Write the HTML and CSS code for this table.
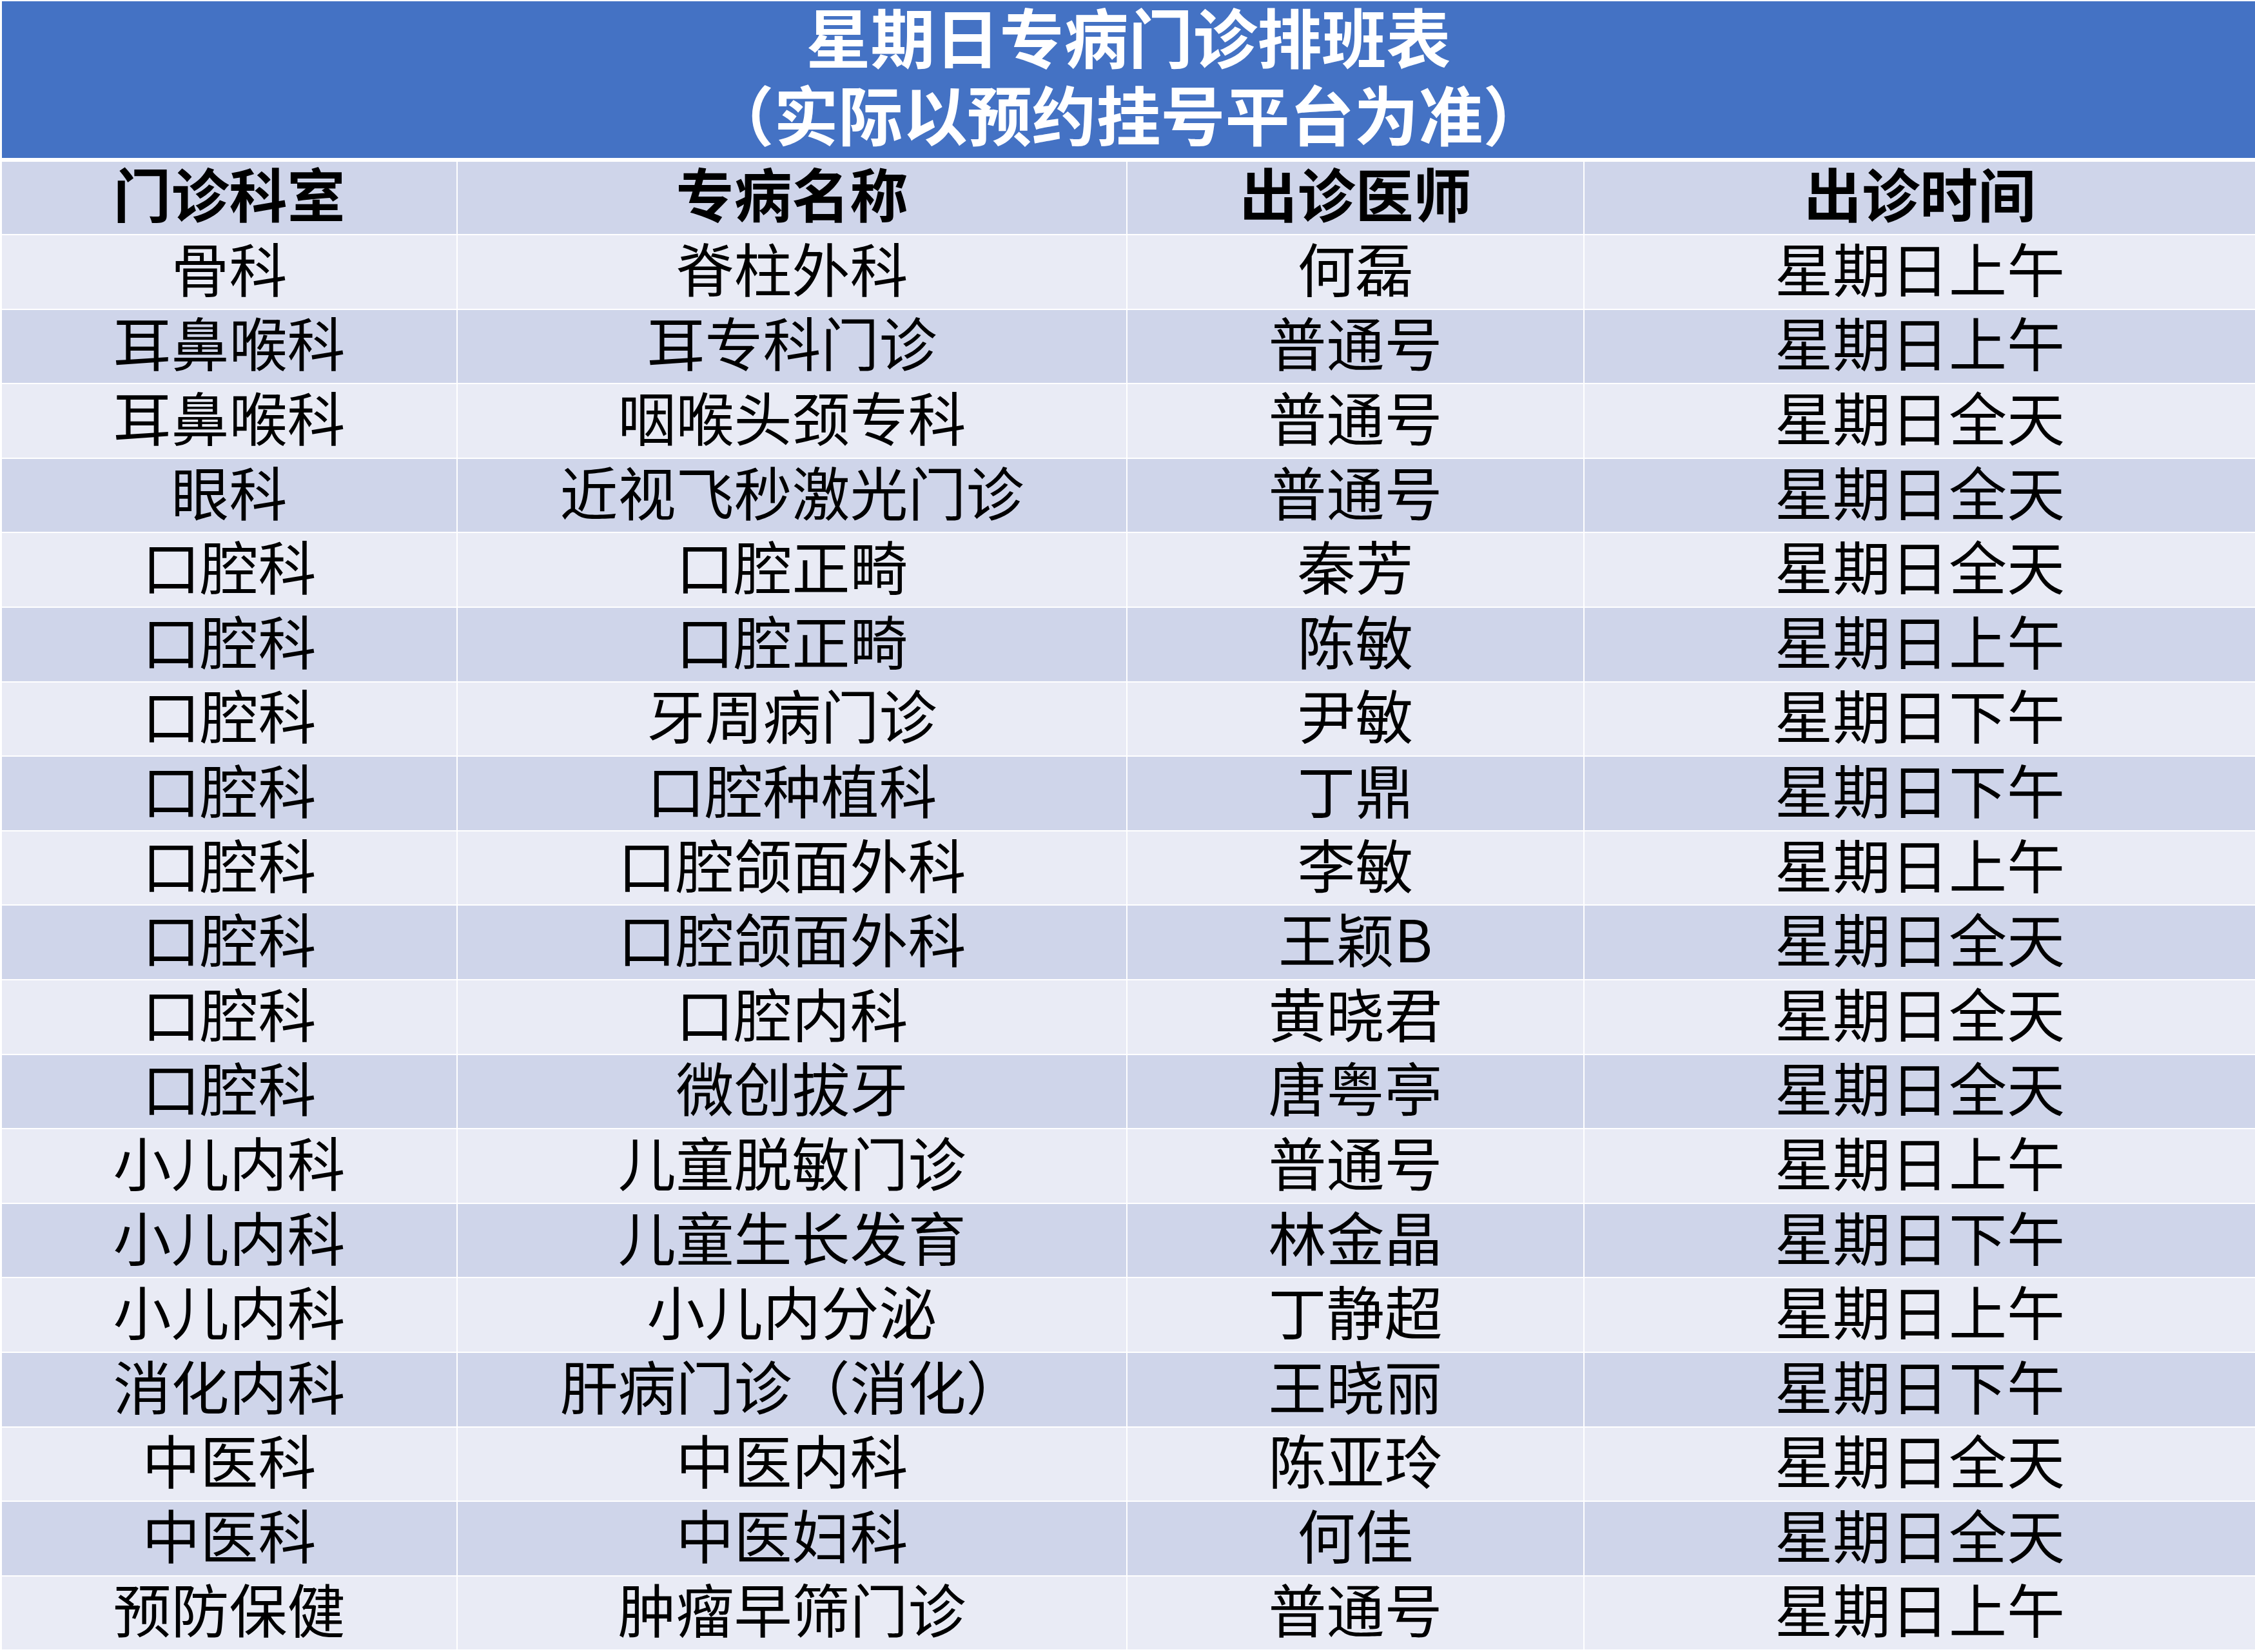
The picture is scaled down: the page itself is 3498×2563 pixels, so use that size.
FILE: index.html
```html
<!DOCTYPE html>
<html lang="zh-CN">
<head>
<meta charset="utf-8">
<title>星期日专病门诊排班表</title>
<link rel="stylesheet" href="styles.css">
</head>
<body>
<div class="sheet">
  <div class="title">
    <div class="title-line">星期日专病门诊排班表</div>
    <div class="title-line">（实际以预约挂号平台为准）</div>
  </div>
  <div class="grid">
    <div class="cell head">门诊科室</div><div class="cell head">专病名称</div><div class="cell head">出诊医师</div><div class="cell head">出诊时间</div>

    <div class="cell light">骨科</div><div class="cell light">脊柱外科</div><div class="cell light">何磊</div><div class="cell light">星期日上午</div>
    <div class="cell dark">耳鼻喉科</div><div class="cell dark">耳专科门诊</div><div class="cell dark">普通号</div><div class="cell dark">星期日上午</div>
    <div class="cell light">耳鼻喉科</div><div class="cell light">咽喉头颈专科</div><div class="cell light">普通号</div><div class="cell light">星期日全天</div>
    <div class="cell dark">眼科</div><div class="cell dark">近视飞秒激光门诊</div><div class="cell dark">普通号</div><div class="cell dark">星期日全天</div>
    <div class="cell light">口腔科</div><div class="cell light">口腔正畸</div><div class="cell light">秦芳</div><div class="cell light">星期日全天</div>
    <div class="cell dark">口腔科</div><div class="cell dark">口腔正畸</div><div class="cell dark">陈敏</div><div class="cell dark">星期日上午</div>
    <div class="cell light">口腔科</div><div class="cell light">牙周病门诊</div><div class="cell light">尹敏</div><div class="cell light">星期日下午</div>
    <div class="cell dark">口腔科</div><div class="cell dark">口腔种植科</div><div class="cell dark">丁鼎</div><div class="cell dark">星期日下午</div>
    <div class="cell light">口腔科</div><div class="cell light">口腔颌面外科</div><div class="cell light">李敏</div><div class="cell light">星期日上午</div>
    <div class="cell dark">口腔科</div><div class="cell dark">口腔颌面外科</div><div class="cell dark">王颖B</div><div class="cell dark">星期日全天</div>
    <div class="cell light">口腔科</div><div class="cell light">口腔内科</div><div class="cell light">黄晓君</div><div class="cell light">星期日全天</div>
    <div class="cell dark">口腔科</div><div class="cell dark">微创拔牙</div><div class="cell dark">唐粤亭</div><div class="cell dark">星期日全天</div>
    <div class="cell light">小儿内科</div><div class="cell light">儿童脱敏门诊</div><div class="cell light">普通号</div><div class="cell light">星期日上午</div>
    <div class="cell dark">小儿内科</div><div class="cell dark">儿童生长发育</div><div class="cell dark">林金晶</div><div class="cell dark">星期日下午</div>
    <div class="cell light">小儿内科</div><div class="cell light">小儿内分泌</div><div class="cell light">丁静超</div><div class="cell light">星期日上午</div>
    <div class="cell dark">消化内科</div><div class="cell dark">肝病门诊（消化）</div><div class="cell dark">王晓丽</div><div class="cell dark">星期日下午</div>
    <div class="cell light">中医科</div><div class="cell light">中医内科</div><div class="cell light">陈亚玲</div><div class="cell light">星期日全天</div>
    <div class="cell dark">中医科</div><div class="cell dark">中医妇科</div><div class="cell dark">何佳</div><div class="cell dark">星期日全天</div>
    <div class="cell light">预防保健</div><div class="cell light">肿瘤早筛门诊</div><div class="cell light">普通号</div><div class="cell light">星期日上午</div>
  </div>
</div>
</body>
</html>
```

FILE: styles.css
```css
html, body {
  margin: 0;
  padding: 0;
  background: #ffffff;
}

body {
  font-family: "Noto Sans CJK SC", "Noto Sans", sans-serif;
  color: #000000;
}

.sheet {
  width: 3498px;
  height: 2563px;
  padding: 2px 0 0 3px;
  box-sizing: border-box;
  overflow: hidden;
}

.title {
  height: 243px;
  background: #4472C4;
  color: #ffffff;
  font-weight: 700;
  font-size: 100px;
  display: flex;
  flex-direction: column;
  align-items: center;
  justify-content: center;
  padding-bottom: 18px;
  box-sizing: border-box;
}

.title-line {
  line-height: 120px;
  white-space: nowrap;
}

.grid {
  margin-top: 6px;
  display: grid;
  grid-template-columns: 705px 1037px 707px 1040px;
  grid-template-rows: 112px;
  grid-auto-rows: 113.6px;
  gap: 2px;
}

.cell {
  display: flex;
  align-items: center;
  justify-content: center;
  font-size: 90px;
  line-height: 1;
  white-space: nowrap;
  padding-bottom: 16px;
  box-sizing: border-box;
}

.head {
  background: #CFD5EA;
  font-weight: 700;
  padding-bottom: 18px;
}

.light {
  background: #E9EBF5;
}

.dark {
  background: #CFD5EA;
}
```
